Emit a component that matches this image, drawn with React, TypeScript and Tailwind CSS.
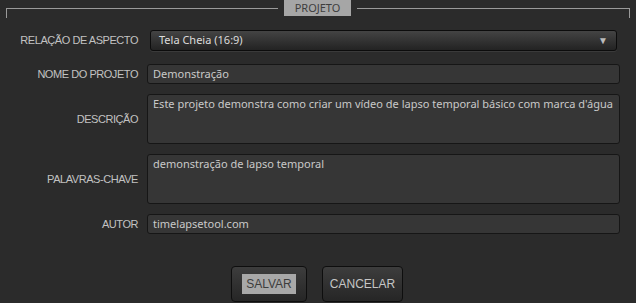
import React from "react";

const font = { fontFamily: '"Liberation Sans", Arial, sans-serif' };
const fieldFont = { fontFamily: '"Noto Sans", "Liberation Sans", sans-serif' };

function Label({ children }: { children: React.ReactNode }) {
  return (
    <div className="w-[132px] shrink-0 text-right text-[11px] uppercase tracking-[-0.45px] text-[#c2c2c2] leading-none">
      {children}
    </div>
  );
}

function Field({ value, tall = false }: { value: string; tall?: boolean }) {
  return (
    <div
      className={`flex-1 rounded-[3px] border border-[#161616] bg-[#363636] px-[5px] text-[11px] text-[#c9c9c9] ${
        tall ? "h-[50px] pt-[1px]" : "flex h-[20px] items-center"
      }`}
      style={fieldFont}
    >
      {value}
    </div>
  );
}

export default function App() {
  return (
    <div className="h-[303px] w-[636px] overflow-hidden bg-[#2b2b2b] px-[6px]" style={font}>
      {/* frame top with legend */}
      <div className="flex items-start">
        <div className="mt-[8px] h-[10px] flex-1 border-l border-t border-[#9a9a9a]" />
        <div
          className="mx-[6px] flex h-[16px] w-[67px] items-center justify-center bg-[#a6a6a6] text-[11px] text-[#3e3e3e]"
          style={fieldFont}
        >
          PROJETO
        </div>
        <div className="mt-[8px] h-[10px] w-[273px] border-r border-t border-[#9a9a9a]" />
      </div>

      <div className="flex flex-col gap-[10px] pt-[12px] pr-[10px]">
        {/* aspect ratio select */}
        <div className="flex items-center gap-[9px]">
          <Label>Relação de aspecto</Label>
          <div
            className="mx-[3px] flex h-[21px] flex-1 items-center justify-between rounded-[3px] border border-[#0c0c0c] bg-gradient-to-b from-[#444444] to-[#232323] pl-[8px] pr-[8px] text-[11px] text-[#dcdcdc] shadow-[0_1px_0_#3a3a3a]"
            style={fieldFont}
          >
            <span>Tela Cheia (16:9)</span>
            <span className="text-[10px] text-[#bcbcbc]">▼</span>
          </div>
        </div>

        <div className="mt-[3px] flex items-center gap-[9px]">
          <Label>Nome do projeto</Label>
          <Field value="Demonstração" />
        </div>

        <div className="flex items-center gap-[9px]">
          <Label>Descrição</Label>
          <Field
            tall
            value="Este projeto demonstra como criar um vídeo de lapso temporal básico com marca d'água"
          />
        </div>

        <div className="flex items-center gap-[9px]">
          <Label>Palavras-chave</Label>
          <Field tall value="demonstração de lapso temporal" />
        </div>

        <div className="flex items-center gap-[9px]">
          <Label>Autor</Label>
          <Field value="timelapsetool.com" />
        </div>
      </div>

      {/* buttons */}
      <div className="flex justify-center gap-[15px] pt-[32px] pr-[2px]">
        <button className="flex h-[36px] w-[76px] items-center justify-center rounded-[4px] border border-[#0e0e0e] bg-gradient-to-b from-[#3d3d3d] to-[#262626] text-[12px]">
          <span className="bg-[#a8a8a8] px-[4px] py-[1px] text-[#3d3d3d]">SALVAR</span>
        </button>
        <button className="flex h-[36px] w-[81px] items-center justify-center rounded-[4px] border border-[#0e0e0e] bg-gradient-to-b from-[#3d3d3d] to-[#262626] text-[12px] text-[#c6c6c6]">
          CANCELAR
        </button>
      </div>
    </div>
  );
}
